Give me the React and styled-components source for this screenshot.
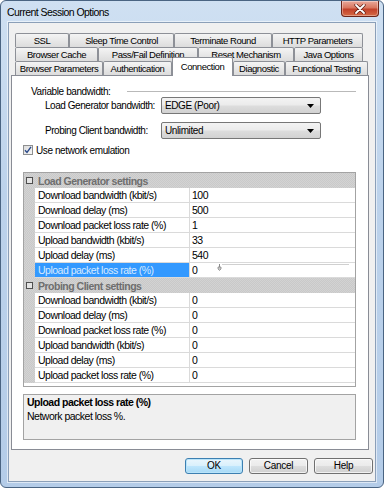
import React from 'react';
import styled, { createGlobalStyle, css } from 'styled-components';

const GlobalStyle = createGlobalStyle`
    html, body {
        margin: 0;
        padding: 0;
        background: #ffffff;
    }
    body {
        font-family: "Liberation Sans", Arial, sans-serif;
        color: #000;
    }
`;

const tabRows = [
    [["SSL", 54], ["Sleep Time Control", 105], ["Terminate Round", 98], ["HTTP Parameters", 91]],
    [["Browser Cache", 83], ["Pass/Fail Definition", 100], ["Reset Mechanism", 96], ["Java Options", 69]],
    [["Browser Parameters", 88], ["Authentication", 69], ["Connection", 61, true], ["Diagnostic", 52], ["Functional Testing", 83]],
];

const loadRows = [
    ["Download bandwidth (kbit/s)", "100"],
    ["Download delay (ms)", "500"],
    ["Download packet loss rate (%)", "1"],
    ["Upload bandwidth (kbit/s)", "33"],
    ["Upload delay (ms)", "540"],
    ["Upload packet loss rate (%)", "0", true],
];

const probeRows = [
    ["Download bandwidth (kbit/s)", "0"],
    ["Download delay (ms)", "0"],
    ["Download packet loss rate (%)", "0"],
    ["Upload bandwidth (kbit/s)", "0"],
    ["Upload delay (ms)", "0"],
    ["Upload packet loss rate (%)", "0"],
];

const Arrow = () => (
    <svg width="7" height="4" viewBox="0 0 7 4">
        <path d="M0 0 H7 L3.5 4 Z" fill="#000" />
    </svg>
);

const Slider = () => (
    <svg width="150" height="14" viewBox="0 0 150 14">
        <path d="M20.5 1 V4" stroke="#8a8a8a" strokeWidth="1" />
        <path d="M19 4 H22 V6 L20.5 7.5 L19 6 Z" fill="#c8c8c8" stroke="#8a8a8a" strokeWidth="0.8" />
        <path d="M23 1.5 H154" stroke="#d0d0d0" strokeWidth="1" />
        <path d="M156.5 9 V13" stroke="#c0c0c0" strokeWidth="1" />
    </svg>
);

const Section = ({ title, rows }) => (
    <>
        <Category>
            <ExpandBox />
            <CategoryText>{title}</CategoryText>
        </Category>
        {rows.map(([label, value, selected]) => (
            <GridRow key={title + label}>
                <Gutter />
                <LabelCell $selected={selected}>{label}</LabelCell>
                <ValueCell>
                    {value}
                    {selected && <SliderWrap><Slider /></SliderWrap>}
                </ValueCell>
            </GridRow>
        ))}
    </>
);

const App = () => {
    return (
        <>
            <GlobalStyle />
            <Window>
                <TitleBar>
                    <Title>Current Session Options</Title>
                    <CloseButton>
                        <svg width="12" height="10" viewBox="0 0 12 10">
                            <path d="M2 1 L10 9 M10 1 L2 9" stroke="#5a1a10" strokeWidth="3.2" strokeLinecap="round" />
                            <path d="M2 1 L10 9 M10 1 L2 9" stroke="#ffffff" strokeWidth="1.8" strokeLinecap="round" />
                        </svg>
                    </CloseButton>
                </TitleBar>
                <Client>
                    <TabStrip>
                        {tabRows.map((row, i) => (
                            <TabRow key={i}>
                                {row.map(([label, w, active]) => (
                                    <Tab key={label} $w={w} $active={active}>{label}</Tab>
                                ))}
                            </TabRow>
                        ))}
                    </TabStrip>
                    <Panel>
                        <GroupHeader>
                            <GroupText>Variable bandwidth:</GroupText>
                            <GroupLine />
                        </GroupHeader>
                        <FieldRow>
                            <FieldLabel>Load Generator bandwidth:</FieldLabel>
                            <Select>
                                <span>EDGE (Poor)</span>
                                <Arrow />
                            </Select>
                        </FieldRow>
                        <FieldRow $gap={8}>
                            <FieldLabel>Probing Client bandwidth:</FieldLabel>
                            <Select>
                                <span>Unlimited</span>
                                <Arrow />
                            </Select>
                        </FieldRow>
                        <CheckRow>
                            <CheckBox>
                                <svg width="8" height="8" viewBox="0 0 8 8">
                                    <path d="M1 4.2 L3 6.4 L7 0.8" stroke="#2b4a8a" strokeWidth="1.4" fill="none" />
                                </svg>
                            </CheckBox>
                            <span>Use network emulation</span>
                        </CheckRow>
                        <PropGrid>
                            <Section title="Load Generator settings" rows={loadRows} />
                            <Section title="Probing Client settings" rows={probeRows} />
                        </PropGrid>
                        <Description>
                            <DescTitle>Upload packet loss rate (%)</DescTitle>
                            <DescText>Network packet loss %.</DescText>
                        </Description>
                    </Panel>
                    <ButtonBar>
                        <Button $w={58} $primary>OK</Button>
                        <Button $w={59}>Cancel</Button>
                        <Button $w={59}>Help</Button>
                    </ButtonBar>
                </Client>
            </Window>
        </>
    );
};

export default App;

const dither = css`
    background: repeating-conic-gradient(#c9c9c9 0 25%, #d3d3d3 0 50%) 0 0 / 2px 2px;
`;

const Window = styled.div`
    width: 384px;
    height: 488px;
    box-sizing: border-box;
    border: 1px solid #4a6482;
    border-radius: 6px;
    background: linear-gradient(180deg, #cfe0f2 0%, #bcd2eb 40%, #b4cce8 100%);
    padding: 0 7px 5px 7px;
    display: flex;
    flex-direction: column;
    overflow: hidden;
`;

const TitleBar = styled.div`
    height: 21px;
    display: flex;
    align-items: flex-start;
    flex-shrink: 0;
`;

const Title = styled.div`
    margin-left: -1px;
    line-height: 23px;
    font-size: 10.5px;
    letter-spacing: -0.55px;
    color: #000;
`;

const CloseButton = styled.div`
    margin-left: auto;
    margin-right: -3px;
    width: 38px;
    height: 16px;
    box-sizing: border-box;
    border: 1px solid #6b2418;
    border-top: none;
    border-radius: 0 0 4px 4px;
    background: linear-gradient(180deg, #e9a99b 0%, #d9765f 45%, #c2412a 55%, #d56a45 100%);
    box-shadow: inset 0 0 0 1px rgba(255, 255, 255, 0.35);
    display: flex;
    align-items: center;
    justify-content: center;
`;

const Client = styled.div`
    flex: 1;
    box-sizing: border-box;
    border: 1px solid #8b9fb8;
    box-shadow: 0 0 0 1px rgba(255, 255, 255, 0.55);
    background: #f0f0f0;
    padding: 10px 0 0 2px;
    display: flex;
    flex-direction: column;
    font-size: 10px;
`;

const TabStrip = styled.div`
    display: flex;
    flex-direction: column;
`;

const TabRow = styled.div`
    display: flex;
    height: 14px;
    margin-left: 4px;
`;

const Tab = styled.div`
    width: ${p => p.$w}px;
    height: 14px;
    box-sizing: border-box;
    flex-shrink: 0;
    border: 1px solid #8d9097;
    border-bottom: none;
    border-radius: 2px 2px 0 0;
    background: linear-gradient(180deg, #f4f4f4 0%, #e8e8e8 50%, #dcdcdc 100%);
    font-size: 9.5px;
    letter-spacing: -0.45px;
    line-height: 13px;
    text-align: center;
    white-space: nowrap;
    overflow: hidden;
    ${p => p.$active && css`
        position: relative;
        z-index: 2;
        height: 19px;
        margin-top: -4px;
        background: #ffffff;
        line-height: 17px;
    `}
`;

const Panel = styled.div`
    width: 358px;
    height: 375px;
    box-sizing: border-box;
    border: 1px solid #898c95;
    background: #ffffff;
    padding-left: 11px;
    display: flex;
    flex-direction: column;
    position: relative;
    z-index: 1;
`;

const GroupHeader = styled.div`
    display: flex;
    align-items: center;
    margin-top: 9px;
    margin-left: 8px;
    height: 12px;
`;

const GroupText = styled.span`
    font-size: 10px;
    letter-spacing: -0.4px;
    white-space: nowrap;
`;

const GroupLine = styled.div`
    flex: 1;
    height: 1px;
    background: #b9b9b9;
    margin-left: 16px;
    margin-right: 12px;
`;

const FieldRow = styled.div`
    display: flex;
    align-items: center;
    height: 17px;
    margin-top: ${p => p.$gap || 0}px;
    margin-left: 22px;
`;

const FieldLabel = styled.span`
    width: 116px;
    font-size: 10px;
    letter-spacing: -0.45px;
    white-space: nowrap;
`;

const Select = styled.div`
    width: 160px;
    height: 17px;
    box-sizing: border-box;
    border: 1px solid #777777;
    border-radius: 2px;
    background: linear-gradient(180deg, #f3f3f3 0%, #ebebeb 48%, #dddddd 52%, #d2d2d2 100%);
    display: flex;
    align-items: center;
    justify-content: space-between;
    padding: 0 6px 0 3px;
    font-size: 10px;
    letter-spacing: -0.4px;
`;

const CheckRow = styled.div`
    display: flex;
    align-items: center;
    gap: 3px;
    margin-top: 5px;
    height: 12px;
    font-size: 10px;
    letter-spacing: -0.4px;
`;

const CheckBox = styled.div`
    width: 10px;
    height: 10px;
    box-sizing: border-box;
    border: 1px solid #8e8f8f;
    background: linear-gradient(135deg, #dcdcdc 0%, #f7f7f7 100%);
    display: flex;
    align-items: center;
    justify-content: center;
`;

const PropGrid = styled.div`
    margin-top: 16px;
    width: 333px;
    height: 215px;
    box-sizing: border-box;
    border: 1px solid #a3a3a3;
    background: #ffffff;
    display: flex;
    flex-direction: column;
    font-size: 10.5px;
    letter-spacing: -0.5px;
`;

const Category = styled.div`
    height: 15px;
    flex-shrink: 0;
    display: flex;
    align-items: center;
    ${dither}
`;

const ExpandBox = styled.div`
    width: 7px;
    height: 7px;
    box-sizing: border-box;
    border: 1px solid #4f4f4f;
    background: #e4e4e4;
    margin-left: 2px;
`;

const CategoryText = styled.span`
    margin-left: 5px;
    font-weight: bold;
    color: #6e6e6e;
`;

const GridRow = styled.div`
    display: grid;
    grid-template-columns: 11px 155px 1fr;
    height: 15px;
    flex-shrink: 0;
`;

const Gutter = styled.div`
    ${dither}
`;

const LabelCell = styled.div`
    box-sizing: border-box;
    border-bottom: 1px solid #dadada;
    border-right: 1px solid #dadada;
    padding-left: 3px;
    line-height: 14px;
    white-space: nowrap;
    overflow: hidden;
    ${p => p.$selected && css`
        background: #3399ff;
        color: #d6eaff;
    `}
`;

const ValueCell = styled.div`
    box-sizing: border-box;
    border-bottom: 1px solid #dadada;
    padding-left: 2px;
    line-height: 14px;
    display: flex;
    align-items: flex-start;
`;

const SliderWrap = styled.div`
    margin-left: 2px;
    height: 14px;
`;

const Description = styled.div`
    margin-top: 7px;
    width: 333px;
    height: 46px;
    box-sizing: border-box;
    border: 1px solid #a3a3a3;
    background: #f0f0f0;
    padding: 0 3px;
    font-size: 10.5px;
    letter-spacing: -0.5px;
    line-height: 14px;
`;

const DescTitle = styled.div`
    font-weight: bold;
`;

const DescText = styled.div``;

const ButtonBar = styled.div`
    display: flex;
    justify-content: flex-end;
    gap: 6px;
    margin-top: 8px;
    padding-right: 2px;
`;

const Button = styled.div`
    width: ${p => p.$w}px;
    height: 16px;
    box-sizing: border-box;
    border: 1px solid #707070;
    border-radius: 3px;
    background: linear-gradient(180deg, #f2f2f2 0%, #ebebeb 48%, #dddddd 52%, #cfcfcf 100%);
    box-shadow: inset 0 0 0 1px rgba(255, 255, 255, 0.7);
    font-size: 10px;
    letter-spacing: -0.3px;
    line-height: 14px;
    text-align: center;
    ${p => p.$primary && css`
        border-color: #3c7fb1;
        background: linear-gradient(180deg, #eaf6fd 0%, #d9f0fc 48%, #bee6fd 52%, #a7d9f5 100%);
        box-shadow: inset 0 0 0 1px #b9e4fa;
    `}
`;
